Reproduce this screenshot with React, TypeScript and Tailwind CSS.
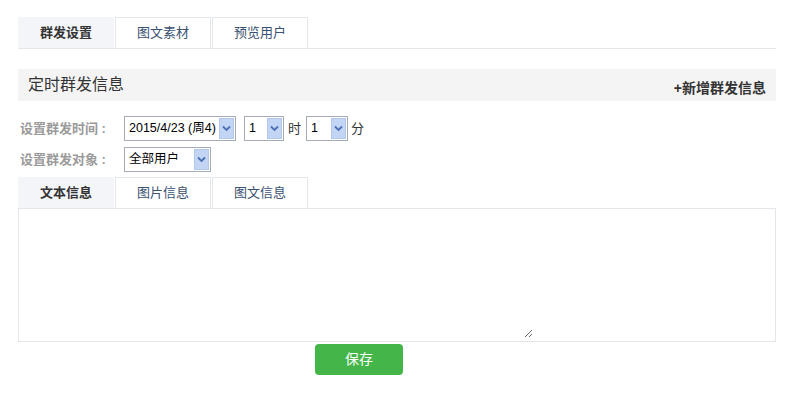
import React from 'react';

const FONT = { fontFamily: '"Liberation Sans", "Noto Sans CJK SC", sans-serif' };

const Arrow = () => (
  <div className="flex items-center justify-center w-[15px] h-[21px] bg-[#c3d5f4] border border-[#b3c7ec] shrink-0">
    <svg width="9" height="7" viewBox="0 0 9 7">
      <path d="M1 1.5 L4.5 5 L8 1.5" fill="none" stroke="#4d6fb3" strokeWidth="1.8" />
    </svg>
  </div>
);

const FakeSelect = ({ value, width }: { value: string; width: string }) => (
  <div className={`flex items-center justify-between h-[25px] border border-[#a5acb5] bg-white pl-[4px] pr-px ${width}`}>
    <span className="text-[12.5px] text-black whitespace-nowrap">{value}</span>
    <Arrow />
  </div>
);

const Tabs = ({ items }: { items: string[] }) => (
  <div className="flex h-[32px] border-b border-[#e3e6ea]">
    {items.map((t, i) => (
      <div
        key={t}
        className={
          i === 0
            ? 'w-[96px] mr-px flex items-center justify-center bg-[#f3f5f8] text-[13px] font-bold text-[#333]'
            : 'w-[96px] mr-px flex items-center justify-center border border-b-0 border-[#e3e6ea] bg-white text-[13px] text-[#3a5170]'
        }
      >
        {t}
      </div>
    ))}
  </div>
);

export default function App() {
  return (
    <div className="w-[797px] h-[415px] bg-white pt-[17px] pl-[18px]" style={FONT}>
      <div className="w-[758px]">
        <Tabs items={['群发设置', '图文素材', '预览用户']} />

        <div className="mt-[20px] h-[32px] bg-[#f4f4f4] flex items-center justify-between pl-[10px] pr-[10px]">
          <span className="text-[16px] text-[#333]">定时群发信息</span>
          <span className="text-[14px] font-bold text-[#333] mt-[6px]">+新增群发信息</span>
        </div>

        <div className="mt-[15px] flex items-center pl-[2px]">
          <span className="w-[104px] text-[13px] font-bold text-[#9a9a9a] whitespace-nowrap">设置群发时间 :</span>
          <FakeSelect value="2015/4/23 (周4)" width="w-[112px]" />
          <div className="ml-[8px]">
            <FakeSelect value="1" width="w-[40px]" />
          </div>
          <span className="ml-[4px] mr-[5px] text-[13px] text-[#333]">时</span>
          <FakeSelect value="1" width="w-[42px]" />
          <span className="ml-[3px] text-[13px] text-[#333]">分</span>
        </div>

        <div className="mt-[6px] flex items-center pl-[2px]">
          <span className="w-[104px] text-[13px] font-bold text-[#9a9a9a] whitespace-nowrap">设置群发对象 :</span>
          <FakeSelect value="全部用户" width="w-[87px]" />
        </div>

        <div className="mt-[5px]">
          <Tabs items={['文本信息', '图片信息', '图文信息']} />
          <div className="h-[133px] border border-t-0 border-[#e3e6ea] p-[2px]">
            <textarea className="w-[512px] h-[127px] border-0 outline-none block" />
          </div>
        </div>

        <button className="mt-[2px] ml-[297px] w-[88px] h-[31px] rounded-[4px] bg-[#44b549] text-white text-[14px]">
          保存
        </button>
      </div>
    </div>
  );
}
